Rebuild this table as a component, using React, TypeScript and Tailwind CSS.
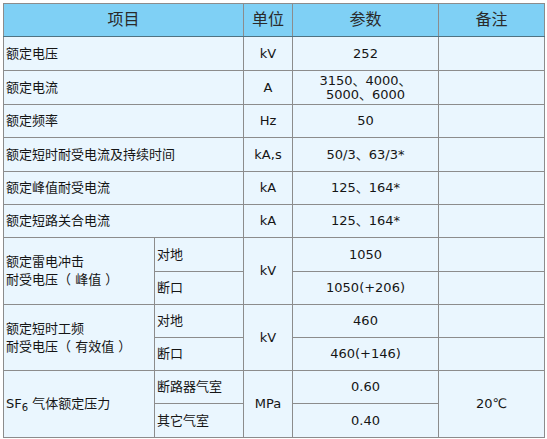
const rows: { name: string; unit: string; value: React.ReactNode; h: string }[] = [
  { name: "额定电压", unit: "kV", value: "252", h: "h-[34px]" },
  {
    name: "额定电流",
    unit: "A",
    value: (
      <span className="block leading-[14px]">
        3150、4000、
        <br />
        5000、6000
      </span>
    ),
    h: "h-[34px]",
  },
  { name: "额定频率", unit: "Hz", value: "50", h: "h-[33px]" },
  { name: "额定短时耐受电流及持续时间", unit: "kA,s", value: "50/3、63/3*", h: "h-[34px]" },
  { name: "额定峰值耐受电流", unit: "kA", value: "125、164*", h: "h-[33px]" },
  { name: "额定短路关合电流", unit: "kA", value: "125、164*", h: "h-[33px]" },
]

const cell = "border border-[#8c8c8c] align-middle"
const lat = "text-center"

export default function App() {
  return (
    <div className="bg-white pl-[3px] pt-[3px]">
      <table
        className="w-[541px] table-fixed border-collapse bg-[#eaf6fe] text-[13px] leading-[16px] text-[#151515]"
        style={{ fontFamily: '"DejaVu Sans", "Noto Sans CJK SC", sans-serif' }}
      >
        <colgroup>
          <col className="w-[151px]" />
          <col className="w-[89px]" />
          <col className="w-[49px]" />
          <col className="w-[146px]" />
          <col className="w-[106px]" />
        </colgroup>
        <thead>
          <tr className="h-[33px] bg-[#7fd0f5] text-[16px] text-[#2a2a2a]">
            <th colSpan={2} className={`${cell} border-b-[#4f7383] font-normal`}>项目</th>
            <th className={`${cell} border-b-[#4f7383] font-normal`}>单位</th>
            <th className={`${cell} border-b-[#4f7383] font-normal`}>参数</th>
            <th className={`${cell} border-b-[#4f7383] font-normal`}>备注</th>
          </tr>
        </thead>
        <tbody>
          {rows.map((r) => (
            <tr key={r.name} className={r.h}>
              <td colSpan={2} className={`${cell} pl-[2px]`}>{r.name}</td>
              <td className={`${cell} ${lat}`}>{r.unit}</td>
              <td className={`${cell} ${lat}`}>{r.value}</td>
              <td className={cell}></td>
            </tr>
          ))}

          <tr className="h-[34px]">
            <td rowSpan={2} className={`${cell} pl-[2px] leading-[18px]`}>
              额定雷电冲击
              <br />
              耐受电压（ 峰值 ）
            </td>
            <td className={`${cell} pl-[2px]`}>对地</td>
            <td rowSpan={2} className={`${cell} ${lat}`}>kV</td>
            <td className={`${cell} ${lat}`}>1050</td>
            <td className={cell}></td>
          </tr>
          <tr className="h-[33px]">
            <td className={`${cell} pl-[2px]`}>断口</td>
            <td className={`${cell} ${lat}`}>1050(+206)</td>
            <td className={cell}></td>
          </tr>

          <tr className="h-[33px]">
            <td rowSpan={2} className={`${cell} pl-[2px] leading-[18px]`}>
              额定短时工频
              <br />
              耐受电压（ 有效值 ）
            </td>
            <td className={`${cell} pl-[2px]`}>对地</td>
            <td rowSpan={2} className={`${cell} ${lat}`}>kV</td>
            <td className={`${cell} ${lat}`}>460</td>
            <td className={cell}></td>
          </tr>
          <tr className="h-[33px]">
            <td className={`${cell} pl-[2px]`}>断口</td>
            <td className={`${cell} ${lat}`}>460(+146)</td>
            <td className={cell}></td>
          </tr>

          <tr className="h-[33px]">
            <td rowSpan={2} className={`${cell} pl-[2px]`}>
              SF<sub className="text-[10px]">6</sub> 气体额定压力
            </td>
            <td className={`${cell} pl-[2px]`}>断路器气室</td>
            <td rowSpan={2} className={`${cell} ${lat}`}>MPa</td>
            <td className={`${cell} ${lat}`}>0.60</td>
            <td rowSpan={2} className={`${cell} ${lat}`}>20℃</td>
          </tr>
          <tr className="h-[34px]">
            <td className={`${cell} pl-[2px]`}>其它气室</td>
            <td className={`${cell} ${lat}`}>0.40</td>
          </tr>
        </tbody>
      </table>
    </div>
  )
}
